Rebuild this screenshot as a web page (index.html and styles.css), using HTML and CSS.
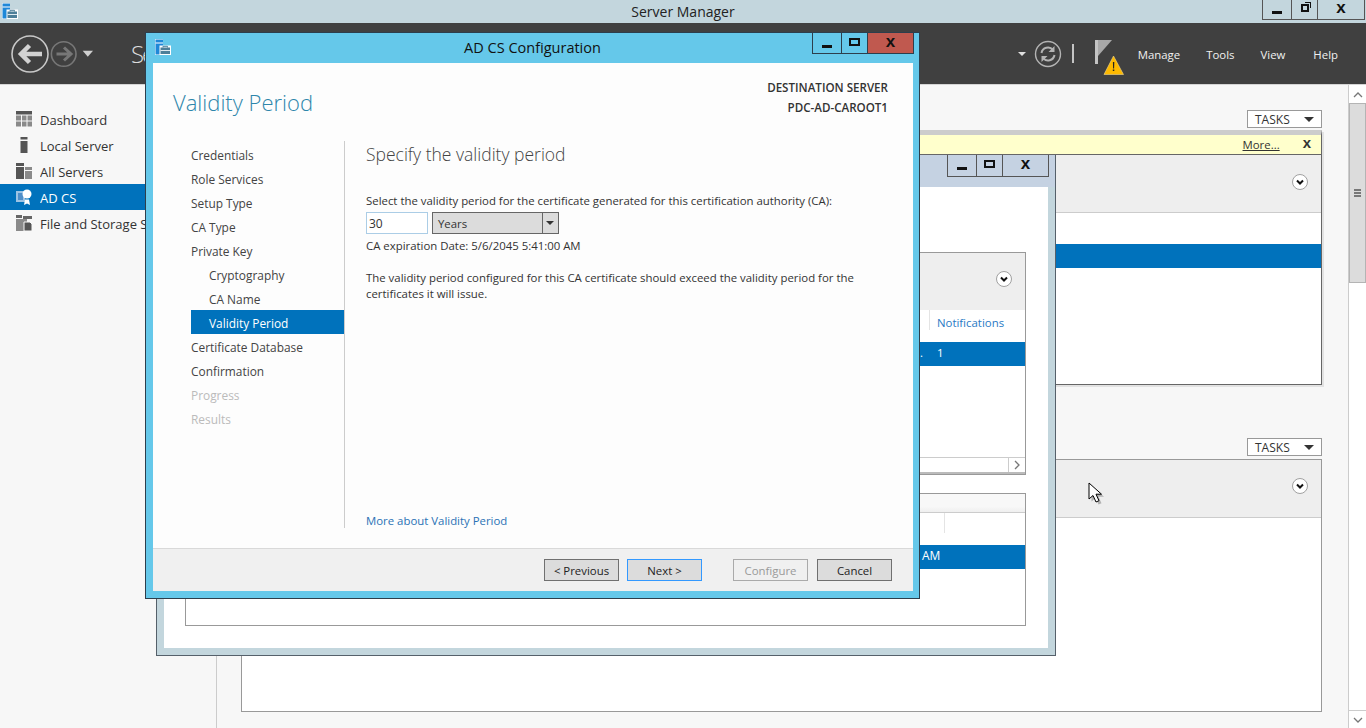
FILE: index.html
```html
<!DOCTYPE html>
<html lang="en">
<head>
  <meta charset="UTF-8">
  <meta name="viewport" content="width=device-width, initial-scale=1.0">
  <title>Server Manager</title>
  <link rel="stylesheet" href="styles.css">
</head>
<body>

<svg width="0" height="0" class="defs">
  <symbol id="appIcon" viewBox="0 0 16 16">
    <rect x="0" y="0" width="8" height="16" fill="#fff"/>
    <rect x="0.5" y="0.5" width="7.5" height="15" fill="#1e88d8"/>
    <rect x="0.5" y="3.500" width="7.5" height="1" fill="#fff"/>
    <path d="M4.500 6.500H16V16H4.500z" fill="#fff"/>
    <path d="M5.500 8.500h9.500V15H5.500z" fill="#4d7f99"/>
    <path d="M5.500 11h9.500v1H5.500z" fill="#dfeaf0"/>
    <path d="M8 8.500V7.300h4.500V8.500" fill="none" stroke="#4d7f99"/>
  </symbol>
  <symbol id="chevCircle" viewBox="0 0 16 16">
    <circle cx="8" cy="8" r="7.5" fill="#fff" stroke="#a0a0a0"/>
    <path d="M5 6.500 8 9.500 11 6.500" fill="none" stroke="#111" stroke-width="2"/>
  </symbol>
</svg>

<!-- top title bar -->
<div class="titlebar">
  <svg class="app-icon"><use href="#appIcon"/></svg>
  <div class="titlebar-text">Server Manager</div>
  <div class="win-btns main-btns">
    <div class="win-btn btn-min"><span class="glyph-min"></span></div>
    <div class="win-btn btn-max"><span class="glyph-restore"></span></div>
    <div class="win-btn btn-close">x</div>
  </div>
</div>

<!-- dark header -->
<div class="header">
  <svg class="nav-arrows" width="84" height="40" viewBox="0 0 84 40">
    <circle cx="19" cy="20" r="18" fill="none" stroke="#c8c8c8" stroke-width="1.6"/>
    <path d="M31 20H11M18.500 11.500 10 20l8.500 8.500" fill="none" stroke="#d2d2d2" stroke-width="4.500"/>
    <circle cx="52.700" cy="20" r="12.300" fill="none" stroke="#777" stroke-width="1.6"/>
    <path d="M45.500 20H60M53 13.500 60 20l-7 6.500" fill="none" stroke="#777" stroke-width="3"/>
    <path d="M71.700 16.700H82L76.800 22.700Z" fill="#cfcfcf"/>
  </svg>
  <div class="crumb">Se</div>
  <div class="header-right">
    <span class="small-caret"></span>
    <svg class="refresh" width="28" height="28" viewBox="0 0 28 28">
      <circle cx="14" cy="14" r="12.500" fill="none" stroke="#b4b4b4" stroke-width="1.4"/>
      <path d="M7.500 13a6.500 6.500 0 0 1 11.500-3M20.500 15a6.500 6.500 0 0 1-11.500 3" fill="none" stroke="#b4b4b4" stroke-width="2"/>
      <path d="M20.500 6v6h-6zM7.500 22v-6h6z" fill="#b4b4b4"/>
    </svg>
    <span class="sep"></span>
    <svg class="flag" width="29" height="36" viewBox="0 0 29 36">
      <path d="M0 0h3v24H0z" fill="#c4c4c4"/>
      <path d="M3 0H17L3 16z" fill="#a8a8a8"/>
      <path d="M18.500 16 28.500 34.500H9Z" fill="#fdb900" stroke="#f4d98a" stroke-width="0.6"/>
      <path d="M17.900 22h1.400l-.2 6.500h-1zM17.800 29.500h1.500V31h-1.500z" fill="#222"/>
    </svg>
    <nav class="menu">
      <span>Manage</span>
      <span>Tools</span>
      <span>View</span>
      <span class="menu-help">Help</span>
    </nav>
  </div>
</div>

<div class="workspace">
  <!-- left nav -->
  <aside class="sidebar">
    <div class="side-item">
      <svg class="side-icon" viewBox="0 0 16 16"><path d="M0 0h16v3.500H0z" fill="#555"/><path d="M0 4.500h5v5H0zM6 4.500h4.500v5H6zM11.500 4.500H16v5h-4.500zM0 10.500h5v5H0zM6 10.500h4.500v5H6zM11.500 10.500H16v5h-4.500z" fill="#8a8a8a"/></svg>
      <span class="side-label">Dashboard</span>
    </div>
    <div class="side-item">
      <svg class="side-icon" viewBox="0 0 16 16"><path d="M4.500 0H11.500V2.500H4.500z" fill="#555"/><path d="M4.500 4H11.500V16H4.500z" fill="#555"/></svg>
      <span class="side-label">Local Server</span>
    </div>
    <div class="side-item">
      <svg class="side-icon" viewBox="0 0 16 16"><path d="M0 0h8v3H0zM0 4h8v12H0z" fill="#555"/><path d="M9 4h7v3H9zM9 8h7v8H9z" fill="#8a8a8a"/></svg>
      <span class="side-label">All Servers</span>
    </div>
    <div class="side-item is-active">
      <svg class="side-icon" viewBox="0 0 16 16"><path d="M0 2h9v11H0z" fill="#9cc3e4"/><path d="M2 4h5v7H2z" fill="#4f8fc9"/><path d="M9 10.500 8 16l3-1.500 3 1.500-1-5.500z" fill="#fff"/><circle cx="11" cy="5" r="4.500" fill="#fff"/></svg>
      <span class="side-label">AD CS</span>
    </div>
    <div class="side-item">
      <svg class="side-icon" viewBox="0 0 16 16"><path d="M0 0h6v3H0zM7 1h9v3H7z" fill="#666"/><path d="M0 4h11v12H0z" fill="#8a8a8a"/><path d="M8 7h6l2 2v7H8z" fill="#555" stroke="#f7f7f7"/></svg>
      <span class="side-label">File and Storage Services</span>
    </div>
  </aside>

  <main class="content">
    <div class="tasks-row tasks-one"><div class="tasks-btn">TASKS<span class="caret"></span></div></div>
    <section class="bg-panel panel-a">
      <div class="notice"><span class="more">More...</span><span class="notice-x">x</span></div>
      <div class="panel-head"><svg class="chev"><use href="#chevCircle"/></svg></div>
      <div class="panel-body">
        <div class="row-space row-a"></div>
        <div class="row-selected"></div>
      </div>
    </section>
    <div class="tasks-row tasks-two"><div class="tasks-btn">TASKS<span class="caret"></span></div></div>
    <section class="bg-panel panel-b">
      <div class="panel-head head-b"><svg class="chev"><use href="#chevCircle"/></svg></div>
      <div class="panel-body"></div>
    </section>
  </main>

  <!-- page scrollbar -->
  <div class="page-scroll">
    <div class="scroll-end"><svg width="12" height="8" viewBox="0 0 12 8"><path d="M2 6 6 2l4 4" fill="none" stroke="#777" stroke-width="1.300"/></svg></div>
    <div class="scroll-thumb"><span></span><span></span><span></span></div>
    <div class="scroll-track"></div>
    <div class="scroll-end"><svg width="12" height="8" viewBox="0 0 12 8"><path d="M2 2l4 4 4-4" fill="none" stroke="#777" stroke-width="1.300"/></svg></div>
  </div>
</div>

<!-- wizard behind the dialog -->
<div class="window back-window">
  <div class="back-title">
    <div class="win-btns back-btns">
      <div class="win-btn btn-min"><span class="glyph-min"></span></div>
      <div class="win-btn btn-max"><span class="glyph-max"></span></div>
      <div class="win-btn btn-close wide">x</div>
    </div>
  </div>
  <div class="back-body">
    <section class="inner-panel inner-a">
      <div class="inner-head"><svg class="chev"><use href="#chevCircle"/></svg></div>
      <div class="col-row"><span class="col-line line-a"></span><span class="col-name">Notifications</span></div>
      <div class="row-selected inner-sel"><span class="dot-cell">.</span><span class="num-cell">1</span></div>
      <div class="inner-fill"></div>
      <div class="h-scroll">
        <div class="h-scroll-end"><svg width="8" height="10" viewBox="0 0 8 10"><path d="M2 1l4 4-4 4" fill="none" stroke="#777" stroke-width="1.300"/></svg></div>
      </div>
    </section>
    <section class="inner-panel inner-b">
      <div class="inner-head-b"></div>
      <div class="col-row col-row-b"><span class="col-line"></span></div>
      <div class="row-selected inner-sel"><span class="am-cell">AM</span></div>
    </section>
  </div>
</div>

<!-- AD CS Configuration dialog -->
<div class="window dialog">
  <div class="dialog-title">
    <svg class="app-icon dlg-icon"><use href="#appIcon"/></svg>
    <div class="dialog-title-text">AD CS Configuration</div>
    <div class="win-btns dlg-btns">
      <div class="win-btn btn-min"><span class="glyph-min"></span></div>
      <div class="win-btn btn-max"><span class="glyph-max"></span></div>
      <div class="win-btn btn-close red">x</div>
    </div>
  </div>
  <div class="dialog-body">
    <div class="dialog-top">
      <h1>Validity Period</h1>
      <div class="dest">
        <div>DESTINATION SERVER</div>
        <div>PDC-AD-CAROOT1</div>
      </div>
    </div>
    <div class="dialog-main">
      <ul class="steps">
        <li>Credentials</li>
        <li>Role Services</li>
        <li>Setup Type</li>
        <li>CA Type</li>
        <li>Private Key</li>
        <li class="sub">Cryptography</li>
        <li class="sub">CA Name</li>
        <li class="sub current">Validity Period</li>
        <li>Certificate Database</li>
        <li>Confirmation</li>
        <li class="off">Progress</li>
        <li class="off">Results</li>
      </ul>
      <div class="pane">
        <h2>Specify the validity period</h2>
        <p class="select-label">Select the validity period for the certificate generated for this certification authority (CA):</p>
        <div class="period">
          <div class="period-input">30</div>
          <div class="period-select">
            <span class="period-value">Years</span>
            <span class="period-arrow"></span>
          </div>
        </div>
        <p class="expiry">CA expiration Date: 5/6/2045 5:41:00 AM</p>
        <p class="note">The validity period configured for this CA certificate should exceed the validity period for the certificates it will issue.</p>
        <a class="more-link">More about Validity Period</a>
      </div>
    </div>
    <div class="dialog-foot">
      <button class="btn">&lt; Previous</button>
      <button class="btn btn-next">Next &gt;</button>
      <button class="btn btn-off">Configure</button>
      <button class="btn">Cancel</button>
    </div>
  </div>
</div>

<!-- mouse pointer -->
<svg class="pointer" width="16" height="24" viewBox="0 0 16 24">
  <path d="M2 2V18L6 14.500 9 21l3-1.300-3-6.500h5.500Z" fill="#000" opacity="0.25" transform="translate(1.500 1.500)"/>
  <path d="M1 1V17L5 13.500 8 20l3-1.300-3-6.500h5.500Z" fill="#fff" stroke="#000"/>
</svg>

</body>
</html>
```

FILE: styles.css
```css
* {
  box-sizing: border-box;
}
html, body {
  margin: 0;
  height: 728px;
  overflow: hidden;
}
body {
  font-family: "Open Sans", "Noto Sans", sans-serif;
  font-size: 11.4px;
  color: #333;
  background-color: #f7f7f7;
  position: relative;
}
.defs {
  position: absolute;
}

/* main title bar */
.titlebar {
  height: 23px;
  background-color: #c3d6dd;
  position: relative;
  text-align: center;
}
.titlebar-text {
  font-size: 14px;
  line-height: 24px;
  color: #222;
}
.app-icon {
  position: absolute;
  left: 2px;
  top: 3px;
  width: 16px;
  height: 16px;
}
.win-btns {
  display: flex;
  position: absolute;
  border: 1px solid #555;
  border-top: none;
}
.win-btn {
  display: flex;
  align-items: center;
  justify-content: center;
  font-family: "Liberation Sans", sans-serif;
  font-weight: bold;
  font-size: 17px;
  line-height: 16px;
  padding-bottom: 3px;
  color: #111;
  border-left: 1px solid #555;
}
.win-btn:first-child {
  border-left: none;
}
.glyph-min {
  width: 10px;
  height: 3px;
  background-color: #111;
  margin-top: 9px;
}
.glyph-max {
  width: 11px;
  height: 8px;
  border: 2px solid #111;
}
.glyph-restore {
  width: 8px;
  height: 8px;
  border: 2px solid #111;
  box-shadow: 2px -2px 0 -1px #c3d6dd, 3px -3px 0 -1px #111;
}
.main-btns {
  right: 1px;
  top: 0;
  height: 20px;
}
.main-btns .btn-min { width: 28px; }
.main-btns .btn-max { width: 26px; }
.main-btns .btn-close { width: 47px; }

/* dark header */
.header {
  height: 62px;
  background-color: #404040;
  border-bottom: 1px solid #d5d5d5;
  display: flex;
  align-items: center;
  position: relative;
}
.nav-arrows {
  margin-left: 11px;
}
.crumb {
  color: #ddd;
  font-size: 24px;
  letter-spacing: -2px;
  margin-left: 36px;
  font-weight: 300;
}
.header-right {
  margin-left: auto;
  display: flex;
  align-items: center;
}
.small-caret {
  width: 0;
  height: 0;
  border-left: 4px solid transparent;
  border-right: 4px solid transparent;
  border-top: 4px solid #e0e0e0;
  margin-right: 8px;
}
.sep {
  width: 2px;
  height: 19px;
  background-color: #c4c4c4;
  margin: 0 21px 0 10px;
}
.flag {
  margin-top: 8px;
}
.menu {
  display: flex;
  gap: 26px;
  color: #f0f0f0;
  margin: 2px 28px 0 14px;
}
.menu-help {
  margin-left: 2px;
}

/* page under the header */
.workspace {
  display: flex;
  height: 643px;
}
.sidebar {
  width: 217px;
  border-right: 1px solid #ccc;
  padding-top: 21px;
  font-size: 13px;
  flex-shrink: 0;
}
.side-item {
  height: 26px;
  display: flex;
  align-items: center;
  padding-left: 16px;
  gap: 8px;
  white-space: nowrap;
  color: #333;
}
.side-label {
  width: 106px;
  overflow: hidden;
  margin-top: 2px;
}
.side-icon {
  width: 16px;
  height: 16px;
  flex-shrink: 0;
}
.is-active {
  background-color: #0072bc;
  color: #fff;
}
.content {
  flex: 1;
  padding: 0 27px 0 24px;
}
.tasks-row {
  display: flex;
  justify-content: flex-end;
}
.tasks-one {
  padding-top: 25px;
}
.tasks-two {
  padding-top: 53px;
}
.tasks-btn {
  width: 75px;
  height: 18px;
  border: 1px solid #999;
  background-color: #fff;
  padding-left: 7px;
  font-size: 12px;
  line-height: 17px;
  position: relative;
  color: #333;
}
.caret {
  position: absolute;
  right: 7px;
  top: 6px;
  width: 0;
  height: 0;
  border-left: 5px solid transparent;
  border-right: 5px solid transparent;
  border-top: 5px solid #333;
}
.bg-panel {
  background-color: #fff;
  border: 1px solid #999;
  display: flex;
  flex-direction: column;
}
.panel-a {
  margin-top: 2px;
  height: 255px;
  border-top: 5px solid #ccc;
  box-shadow: 2px 2px 0 #e2e2e2;
  border-color: #ccc #666 #666 #ccc;
}
.panel-b {
  margin-top: 3px;
  height: 253px;
}
.notice {
  height: 20px;
  background-color: #ffffcc;
  border-bottom: 1px solid #666;
  display: flex;
  justify-content: flex-end;
  align-items: center;
  padding-right: 10px;
}
.more {
  text-decoration: underline;
  margin-right: 23px;
}
.notice-x {
  font-family: "Liberation Sans", sans-serif;
  font-weight: bold;
  font-size: 15px;
  line-height: 14px;
  margin-top: -4px;
}
.panel-head {
  height: 58px;
  background-color: #eee;
  border-bottom: 1px solid #ccc;
  position: relative;
}
.chev {
  position: absolute;
  right: 13px;
  top: 19px;
  width: 16px;
  height: 16px;
}
.head-b {
  height: 58px;
}
.head-b .chev {
  top: 18px;
}
.row-space.row-a {
  height: 31px;
}
.row-selected {
  height: 24px;
  background-color: #0072bc;
  color: #fff;
}

/* page scrollbar */
.page-scroll {
  width: 18px;
  border-left: 1px solid #ccc;
  background-color: #fff;
  display: flex;
  flex-direction: column;
  flex-shrink: 0;
  margin-left: -1px;
  padding-top: 1px;
}
.scroll-end {
  height: 17px;
  display: flex;
  align-items: center;
  justify-content: center;
  background-color: #fff;
}
.scroll-thumb {
  height: 180px;
  background-color: #dcdcdc;
  border: 1px solid #b4b4b4;
  display: flex;
  flex-direction: column;
  justify-content: center;
  align-items: center;
  gap: 1px;
}
.scroll-thumb span {
  width: 7px;
  height: 2px;
  background-color: #777;
}
.scroll-track {
  flex: 1;
  border-bottom: 1px solid #ccc;
}

/* windows */
.window {
  position: absolute;
}
.back-window {
  left: 156px;
  top: 155px;
  width: 900px;
  height: 501px;
  background-color: #c3d6dd;
  border: 1px solid #55606a;
  border-top: none;
  padding: 0 7px 7px 7px;
  display: flex;
  flex-direction: column;
}
.back-title {
  height: 32px;
  position: relative;
  margin: 0 -7px;
  background-color: #c5d2e2;
  flex-shrink: 0;
}
.back-btns {
  right: 6px;
  top: 0;
  height: 22px;
}
.back-btns .btn-min { width: 28px; }
.back-btns .btn-max { width: 26px; }
.back-btns .wide { width: 46px; }
.back-body {
  flex: 1;
  background-color: #fff;
  padding: 65px 22px 0 21px;
  display: flex;
  flex-direction: column;
  gap: 18px;
}
.inner-panel {
  border: 1px solid #999;
  display: flex;
  flex-direction: column;
}
.inner-a {
  height: 223px;
}
.inner-b {
  height: 133px;
}
.inner-head {
  height: 57px;
  background-color: #eee;
  position: relative;
  flex-shrink: 0;
}
.inner-head .chev {
  right: 13px;
  top: 18px;
}
.col-row {
  height: 32px;
  border-left: none;
  position: relative;
}
.col-name {
  position: absolute;
  left: 751px;
  top: 5px;
  color: #2a7ac5;
}
.inner-sel {
  position: relative;
  flex-shrink: 0;
}
.num-cell {
  position: absolute;
  left: 751px;
  top: 3px;
}
.dot-cell {
  position: absolute;
  left: 734px;
  top: 3px;
}
.inner-fill {
  flex: 1;
}
.h-scroll {
  height: 17px;
  border-top: 1px solid #ccc;
  border-bottom: 2px solid #bbb;
  display: flex;
  justify-content: flex-end;
}
.h-scroll-end {
  width: 17px;
  border-left: 1px solid #ccc;
  display: flex;
  align-items: center;
  justify-content: center;
}
.inner-head-b {
  height: 19px;
  background: linear-gradient(to bottom, #f8f8f8 70%, #efefef);
  border-bottom: 1px solid #ccc;
  flex-shrink: 0;
}
.col-row-b {
  height: 32px;
}
.col-line {
  position: absolute;
  left: 758px;
  top: 0;
  width: 1px;
  height: 20px;
  background-color: #e4e4e4;
}
.line-a {
  left: 743px;
}
.am-cell {
  position: absolute;
  left: 736px;
  top: 2px;
  font-size: 12px;
}

/* dialog */
.dialog {
  left: 145px;
  top: 32px;
  width: 775px;
  height: 567px;
  background-color: #65c8ea;
  border: 1px solid #2d3e4c;
  padding: 0 6px 7px 7px;
  display: flex;
  flex-direction: column;
}
.dialog-title {
  height: 30px;
  position: relative;
  flex-shrink: 0;
  margin: 0 -6px 0 -7px;
  text-align: center;
}
.dialog-title-text {
  font-size: 14.5px;
  line-height: 29px;
  color: #111;
}
.dlg-icon {
  left: 9px;
  top: 6px;
}
.dlg-btns {
  right: 5px;
  top: 0;
  height: 21px;
  border-color: #2d3e4c;
}
.dlg-btns .win-btn {
  border-color: #2d3e4c;
}
.dlg-btns .btn-min { width: 28px; }
.dlg-btns .btn-max { width: 26px; }
.dlg-btns .btn-close { width: 46px; }
.red {
  background-color: #c0594f;
}
.dialog-body {
  flex: 1;
  background-color: #fdfdfd;
  display: flex;
  flex-direction: column;
}
.dialog-top {
  height: 78px;
  display: flex;
  justify-content: space-between;
  padding: 15px 25px 0 20px;
}
h1 {
  font-weight: 300;
  font-size: 22px;
  color: #2e86ab;
  margin: 8px 0 0 0;
  line-height: 32px;
}
.dest {
  text-align: right;
  font-weight: 600;
  font-size: 11.6px;
  line-height: 20px;
  color: #333;
}
.dialog-main {
  flex: 1;
  display: flex;
  min-height: 0;
  padding-bottom: 20px;
}
.steps {
  list-style: none;
  margin: 0 0 0 38px;
  padding: 1px 0 0 0;
  width: 154px;
  border-right: 1px solid #ccc;
  flex-shrink: 0;
  color: #444;
  font-size: 11.9px;
}
.steps li {
  height: 24px;
  line-height: 26px;
  width: 153px;
}
.steps .sub {
  padding-left: 18px;
}
.steps .current {
  background-color: #0072bc;
  color: #fff;
}
.steps .off {
  color: #bbb;
}
.pane {
  flex: 1;
  padding-left: 21px;
  padding-right: 30px;
  display: flex;
  flex-direction: column;
}
h2 {
  font-weight: 300;
  font-size: 17.5px;
  color: #444;
  margin: 0;
  line-height: 26px;
}
.select-label {
  margin: 26px 0 0 0;
  line-height: 16px;
}
.period {
  display: flex;
  gap: 4px;
  margin-top: 3px;
}
.period-input {
  width: 62px;
  height: 22px;
  border: 1px solid #abcde6;
  background-color: #fff;
  padding-left: 2px;
  font-size: 12px;
  line-height: 21px;
}
.period-select {
  width: 127px;
  height: 22px;
  border: 1px solid #666;
  background-color: #dcdcdc;
  display: flex;
  justify-content: space-between;
  line-height: 21px;
  padding-left: 5px;
}
.period-arrow {
  width: 16px;
  border-left: 1px solid #666;
  position: relative;
}
.period-arrow::after {
  content: "";
  position: absolute;
  left: 3px;
  top: 8px;
  border-left: 4px solid transparent;
  border-right: 4px solid transparent;
  border-top: 4px solid #333;
}
.expiry {
  margin: 4px 0 0 0;
  line-height: 16px;
}
.note {
  margin: 16px 0 0 0;
  line-height: 16px;
}
.more-link {
  margin-top: auto;
  margin-bottom: -1px;
  color: #2a72b5;
  line-height: 16px;
}
.dialog-foot {
  height: 43px;
  flex-shrink: 0;
  background-color: #f0f0f0;
  border-top: 1px solid #d9d9d9;
  display: flex;
  align-items: center;
  justify-content: flex-end;
  padding: 0 21px 0 0;
  gap: 8px;
}
.btn {
  width: 75px;
  height: 22px;
  border: 1px solid #707070;
  background-color: #dcdcdc;
  font-family: inherit;
  font-size: 11.4px;
  color: #222;
  padding: 0;
}
.btn-next {
  border-color: #3399ff;
  margin-right: 23px;
}
.btn-off {
  background-color: #f0f0f0;
  border-color: #aaa;
  color: #999;
  margin-right: 1px;
}

.pointer {
  position: absolute;
  left: 1088px;
  top: 482px;
}
```
